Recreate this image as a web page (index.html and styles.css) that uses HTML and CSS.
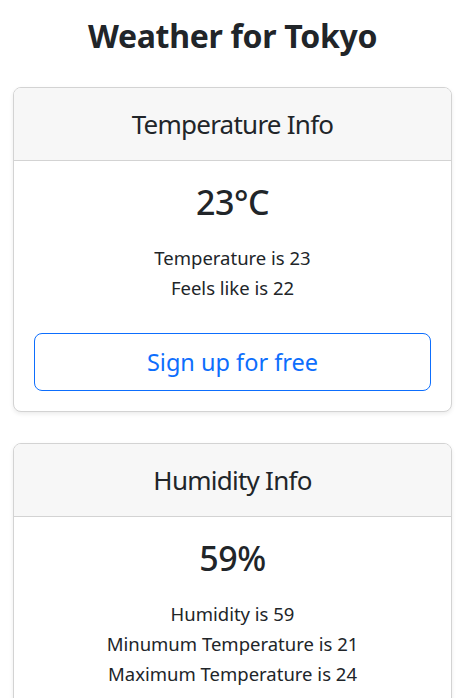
FILE: index.html
```html
<!DOCTYPE html>
<html lang="en">
<head>
<meta charset="utf-8">
<title>Weather for Tokyo</title>
<link rel="stylesheet" href="styles.css">
</head>
<body>
<div class="container">
  <h1 class="title">Weather for Tokyo</h1>
  <div class="card">
    <div class="card-header"><h3 class="card-title">Temperature Info</h3></div>
    <div class="card-body">
      <h2 class="value">23°C</h2>
      <p class="details">Temperature is 23<br>Feels like is 22</p>
      <a class="btn-signup" href="#">Sign up for free</a>
    </div>
  </div>
  <div class="card">
    <div class="card-header"><h3 class="card-title">Humidity Info</h3></div>
    <div class="card-body">
      <h2 class="value">59%</h2>
      <p class="details">Humidity is 59<br>Minumum Temperature is 21<br>Maximum Temperature is 24</p>
    </div>
  </div>
</div>
</body>
</html>
```

FILE: styles.css
```css
html, body {
  margin: 0;
  padding: 0;
  background: #fff;
}
body {
  font-family: "Noto Sans", "Open Sans", sans-serif;
  color: #212529;
  text-align: center;
}
.container {
  padding: 0 10px 0 13px;
}
.title {
  margin: 0 0 32px;
  padding-top: 17px;
  font-size: 32px;
  font-weight: 700;
  letter-spacing: -0.3px;
  line-height: 1.2;
}
.card {
  border: 1px solid #d3d3d3;
  border-radius: 8px;
  box-shadow: 0 2px 4px rgba(0,0,0,0.08);
  margin-bottom: 31px;
  overflow: hidden;
  background: #fff;
}
.card-header {
  background: #f7f7f7;
  border-bottom: 1px solid #d3d3d3;
  height: 72px;
  display: flex;
  align-items: center;
  justify-content: center;
}
.card-title {
  margin: 0;
  font-size: 26px;
  font-weight: 400;
  letter-spacing: -0.75px;
  line-height: 1.2;
}
.card-body {
  padding: 21px 20px 20px;
}
.value {
  margin: 0 0 20px;
  font-size: 34px;
  font-weight: 500;
  letter-spacing: -0.5px;
  line-height: 1.2;
}
.card .details {
  margin: 0 0 30px;
  font-size: 18.5px;
  line-height: 30px;
}
.btn-signup {
  display: block;
  height: 58px;
  box-sizing: border-box;
  border: 1px solid #0d6efd;
  border-radius: 8px;
  color: #0d6efd;
  text-decoration: none;
  font-size: 23.5px;
  line-height: 56px;
}
```
